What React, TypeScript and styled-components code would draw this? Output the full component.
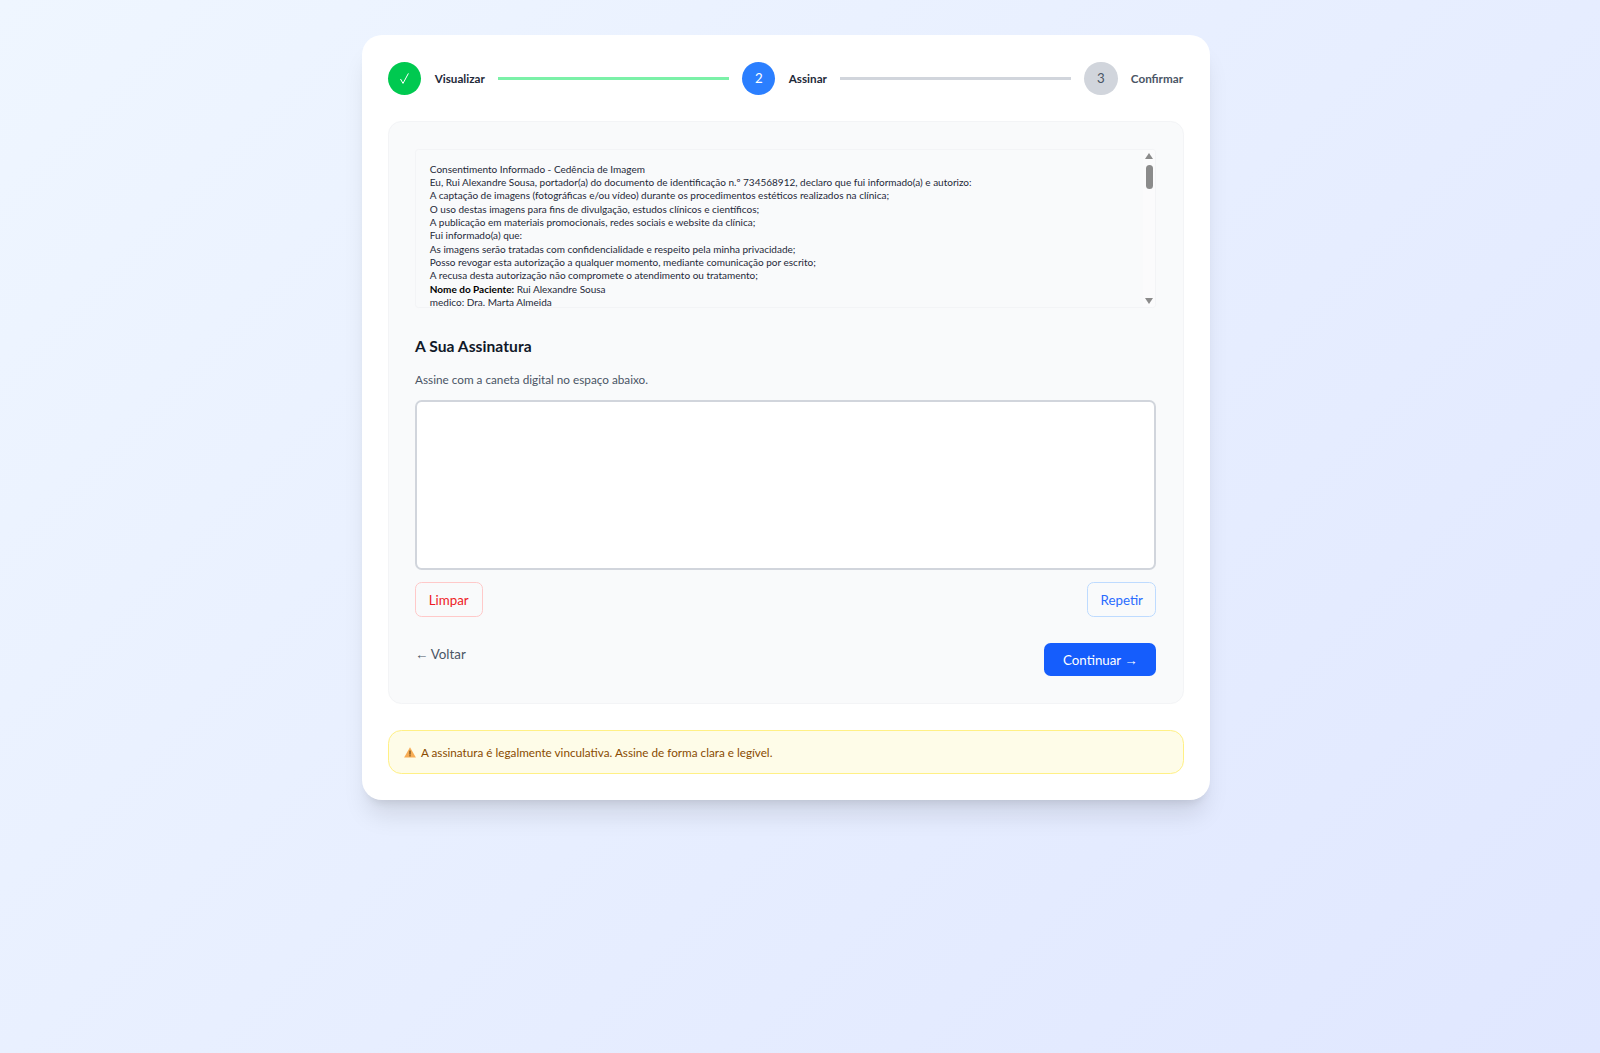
import React from "react";
import styled, { createGlobalStyle } from "styled-components";

const GlobalStyle = createGlobalStyle`
  * {
    box-sizing: border-box;
  }
  body {
    margin: 0;
    font-family: Lato, "Noto Sans", sans-serif;
    color: #101828;
  }
`;

const Page = styled.div`
  min-height: 100vh;
  padding: 35px 28px 0 0;
  background: linear-gradient(135deg, #eff6ff 0%, #e0e7ff 100%);
`;

const Card = styled.main`
  width: 848px;
  margin: 0 auto;
  padding: 26.67px 26px 25.6px;
  background: #fff;
  border-radius: 20px;
  box-shadow: 0 20px 25px -5px rgba(0, 0, 0, 0.1), 0 8px 10px -6px rgba(0, 0, 0, 0.1);
`;

const Stepper = styled.div`
  display: flex;
  align-items: center;
  height: 33.33px;
  margin-bottom: 26px;
  padding-right: 1px;
`;

const Step = styled.div`
  display: flex;
  align-items: center;
  gap: 13.33px;
`;

const Circle = styled.div<{ $bg: string; $fg: string }>`
  width: 33.33px;
  height: 33.33px;
  border-radius: 50%;
  display: flex;
  align-items: center;
  justify-content: center;
  font-size: 13.33px;
  background: ${(p) => p.$bg};
  color: ${(p) => p.$fg};
`;

const StepLabel = styled.span<{ $muted?: boolean }>`
  font-size: 11.67px;
  font-weight: 700;
  color: ${(p) => (p.$muted ? "#4a5565" : "#1e2939")};
`;

const Connector = styled.div<{ $done?: boolean }>`
  flex: 1;
  height: 3.33px;
  margin: 0 13.33px;
  background: ${(p) => (p.$done ? "#7bf1a8" : "#d1d5dc")};
`;

const Panel = styled.section`
  height: 582.7px;
  padding: 26.67px 26.67px 0 26px;
  background: #f9fafb;
  border: 1px solid #f3f4f6;
  border-radius: 13.33px;
`;

const ConsentBox = styled.div`
  position: relative;
  height: 159.5px;
  padding: 13px 0 0 13.8px;
  overflow: hidden;
  border: 1px solid #f3f4f6;
  border-radius: 3.33px;
  font-size: 10px;
  line-height: 13.33px;
  color: #1e2939;
  white-space: nowrap;
`;

const Scrollbar = styled.div`
  position: absolute;
  top: 0;
  right: 0;
  bottom: 0;
  width: 12px;
  display: flex;
  flex-direction: column;
  align-items: center;
  background: #fbfbfc;
`;

const ScrollArrow = styled.svg<{ $down?: boolean }>`
  display: block;
  margin-top: ${(p) => (p.$down ? "auto" : "3px")};
  margin-bottom: ${(p) => (p.$down ? "3px" : "0")};
`;

const ScrollThumb = styled.div`
  width: 7px;
  height: 24px;
  margin-top: 6px;
  background: #8b8b8b;
  border-radius: 3.5px;
`;

const Strong = styled.strong`
  color: #000;
  font-weight: 700;
`;

const Heading = styled.h2`
  margin: 26.5px 0 0;
  height: 23.33px;
  font-size: 15.6px;
  line-height: 23.33px;
  font-weight: 700;
  letter-spacing: 0.05px;
  color: #101828;
`;

const Hint = styled.p`
  margin: 14.3px 0 0;
  height: 16.67px;
  font-size: 11.75px;
  line-height: 16.67px;
  color: #4a5565;
`;

const SignatureArea = styled.div`
  height: 169.5px;
  margin-top: 11.4px;
  background: #fff;
  border: 2px solid #d1d5dc;
  border-radius: 6.67px;
`;

const ActionRow = styled.div`
  display: flex;
  justify-content: space-between;
  margin-top: 12.5px;
`;

const OutlineButton = styled.button<{ $color: string; $border: string }>`
  height: 34.5px;
  min-width: 67.5px;
  padding: 0 12.4px;
  background: transparent;
  border: 1px solid ${(p) => p.$border};
  border-radius: 6.67px;
  font-family: inherit;
  font-size: 13.33px;
  color: ${(p) => p.$color};
`;

const NavRow = styled.div`
  display: flex;
  justify-content: space-between;
  align-items: flex-start;
  margin-top: 26px;
`;

const BackLink = styled.button`
  height: 23px;
  padding: 0;
  background: none;
  border: 0;
  font-family: inherit;
  font-size: 13.33px;
  color: #4a5565;
`;

const PrimaryButton = styled.button`
  width: 112px;
  height: 33.33px;
  padding: 1px 0 0;
  background: #155dfc;
  border: 0;
  border-radius: 6.67px;
  font-family: inherit;
  font-size: 13.33px;
  color: #fff;
`;

const ArrowGlyph = styled.span<{ $tight?: boolean }>`
  font-family: "Noto Sans", sans-serif;
  margin-right: ${(p) => (p.$tight ? "-0.5px" : "0")};
`;

const Notice = styled.div`
  display: flex;
  align-items: center;
  gap: 5px;
  height: 44.5px;
  margin-top: 26.3px;
  padding: 0 15px;
  background: #fefce8;
  border: 1px solid #fff085;
  border-radius: 13.33px;
  font-size: 11.72px;
  color: #894b00;
`;

const CheckIcon = () => (
  <svg width="9" height="11" viewBox="0 0 9 11" fill="none">
    <path d="M0.5 6 L3 10.4 L8.4 0.4" stroke="#fff" strokeWidth="1" />
  </svg>
);

const WarningIcon = () => (
  <svg width="12" height="11" viewBox="0 0 12 11">
    <path d="M6 0.3 L11.9 10.6 H0.1 Z" fill="#f7ad55" />
    <rect x="5.4" y="3.6" width="1.2" height="4" fill="#6b4a1a" />
    <rect x="5.4" y="8.2" width="1.2" height="1.2" fill="#6b4a1a" />
  </svg>
);

const consentLines = [
  "Consentimento Informado - Cedência de Imagem",
  "Eu, Rui Alexandre Sousa, portador(a) do documento de identificação n.º 734568912, declaro que fui informado(a) e autorizo:",
  "A captação de imagens (fotográficas e/ou vídeo) durante os procedimentos estéticos realizados na clínica;",
  "O uso destas imagens para fins de divulgação, estudos clínicos e científicos;",
  "A publicação em materiais promocionais, redes sociais e website da clínica;",
  "Fui informado(a) que:",
  "As imagens serão tratadas com confidencialidade e respeito pela minha privacidade;",
  "Posso revogar esta autorização a qualquer momento, mediante comunicação por escrito;",
  "A recusa desta autorização não compromete o atendimento ou tratamento;",
];

const App = () => {
  return (
    <Page>
      <GlobalStyle />
      <Card>
        <Stepper>
          <Step>
            <Circle $bg="#00c950" $fg="#fff">
              <CheckIcon />
            </Circle>
            <StepLabel>Visualizar</StepLabel>
          </Step>
          <Connector $done />
          <Step>
            <Circle $bg="#2b7fff" $fg="#fff">2</Circle>
            <StepLabel>Assinar</StepLabel>
          </Step>
          <Connector />
          <Step>
            <Circle $bg="#d1d5dc" $fg="#4a5565">3</Circle>
            <StepLabel $muted>Confirmar</StepLabel>
          </Step>
        </Stepper>
        <Panel>
          <ConsentBox>
            {consentLines.map((line) => (
              <div key={line}>{line}</div>
            ))}
            <div>
              <Strong>Nome do Paciente:</Strong> Rui Alexandre Sousa
            </div>
            <div>medico: Dra. Marta Almeida</div>
            <Scrollbar>
              <ScrollArrow width="8" height="6" viewBox="0 0 8 6">
                <path d="M4 0 L8 6 H0 Z" fill="#8b8b8b" />
              </ScrollArrow>
              <ScrollThumb />
              <ScrollArrow $down width="8" height="6" viewBox="0 0 8 6">
                <path d="M0 0 H8 L4 6 Z" fill="#8b8b8b" />
              </ScrollArrow>
            </Scrollbar>
          </ConsentBox>
          <Heading>A Sua Assinatura</Heading>
          <Hint>Assine com a caneta digital no espaço abaixo.</Hint>
          <SignatureArea />
          <ActionRow>
            <OutlineButton $color="#ee1c26" $border="#ffc9c9">Limpar</OutlineButton>
            <OutlineButton $color="#2b6cff" $border="#bedbff">Repetir</OutlineButton>
          </ActionRow>
          <NavRow>
            <BackLink>
              <ArrowGlyph $tight>←</ArrowGlyph> Voltar
            </BackLink>
            <PrimaryButton>
              Continuar <ArrowGlyph>→</ArrowGlyph>
            </PrimaryButton>
          </NavRow>
        </Panel>
        <Notice>
          <WarningIcon />
          A assinatura é legalmente vinculativa. Assine de forma clara e legível.
        </Notice>
      </Card>
    </Page>
  );
};

export default App;
